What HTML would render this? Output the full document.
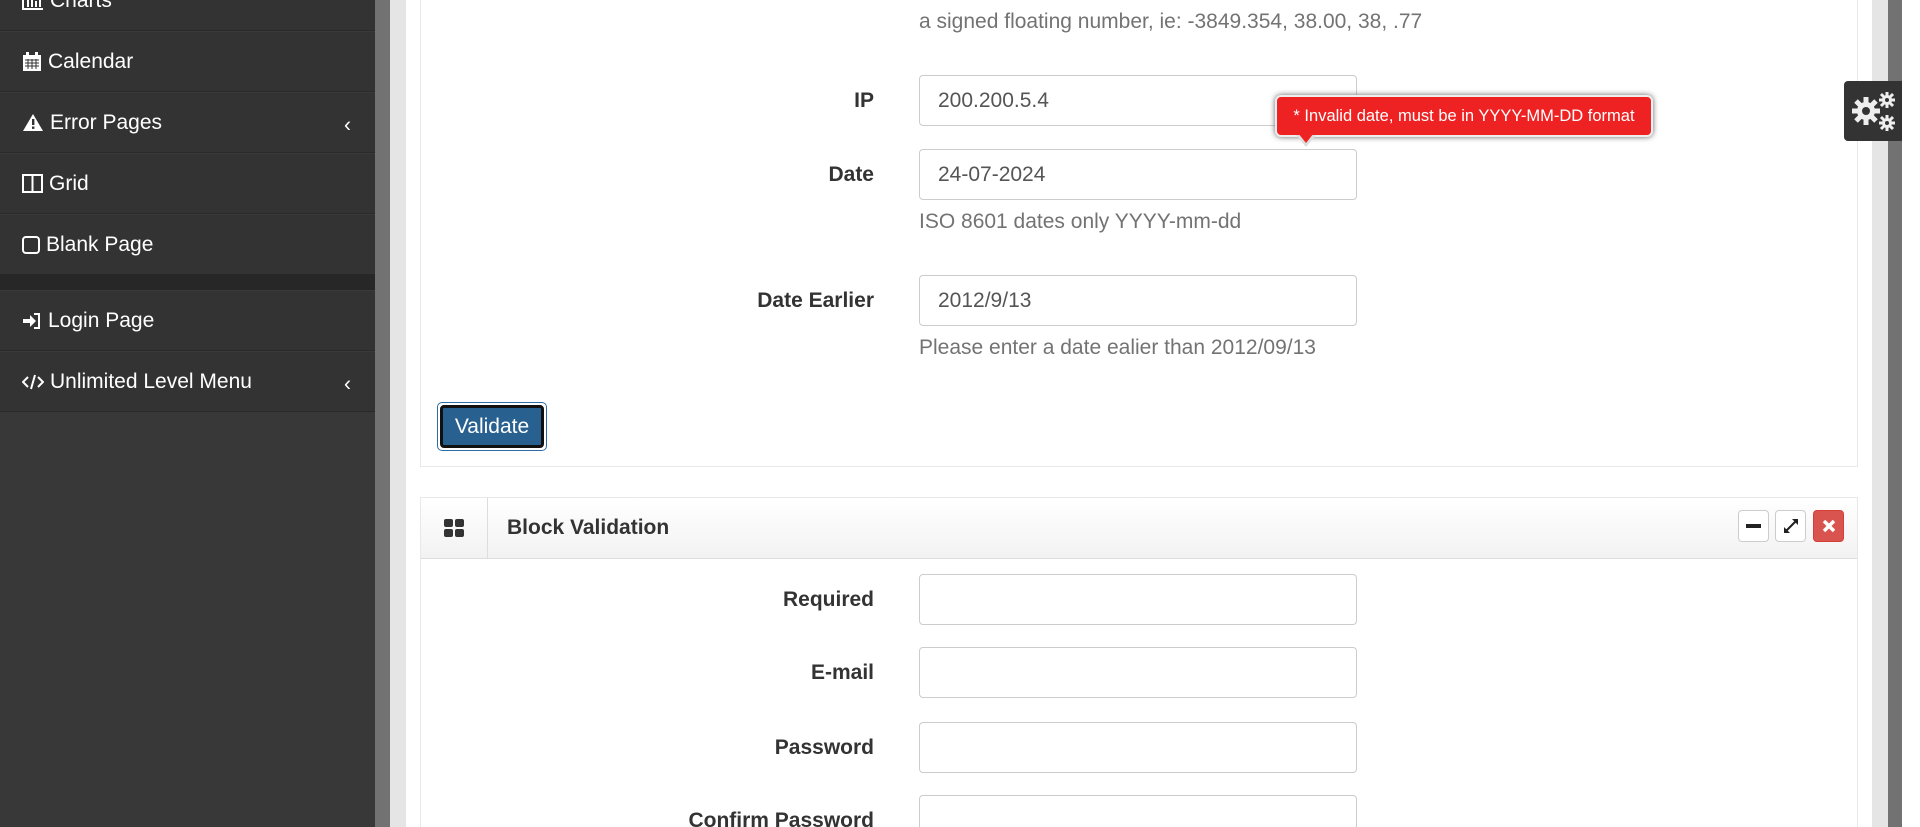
<!DOCTYPE html>
<html style="width:1920px;height:827px;overflow:hidden"><head><meta charset="utf-8"><style>
*{box-sizing:border-box;margin:0;padding:0}
body{width:1920px;height:827px;overflow:hidden;background:#fff;font-family:"Liberation Sans",Arial,sans-serif;position:relative}
.sb{position:absolute;left:0;top:0;width:375px;height:827px;background:#383838}
.it{position:absolute;left:0;width:375px;height:61px;background:#333;border-bottom:1px solid #2a2a2a;border-top:1px solid #3a3a3a;color:#fff;font-size:21px}
.it span{position:absolute;left:22px;top:50%;transform:translateY(-50%);display:flex;align-items:center;gap:6px}
.it .ch{position:absolute;left:344px;top:50%;transform:translateY(-40%);font-size:21px}
.band{position:absolute;left:0;top:274px;width:375px;height:16px;background:#272727}
.s1{position:absolute;left:375px;top:0;width:15px;height:827px;background:#727272}
.s2{position:absolute;left:390px;top:0;width:16px;height:827px;background:#e5e5e5}
.s3{position:absolute;left:1872px;top:0;width:16px;height:827px;background:#e5e5e5}
.s4{position:absolute;left:1888px;top:0;width:14px;height:827px;background:#727272}
.p1{position:absolute;left:420px;top:-10px;width:1438px;height:477px;border:1px solid #e8e8e8}
.p2{position:absolute;left:420px;top:497px;width:1438px;height:330px;border:1px solid #e8e8e8;border-bottom:none}
.hd{position:absolute;left:0;top:0;width:100%;height:61px;background:linear-gradient(#fff,#f2f2f2);border-bottom:1px solid #ddd}
.lbl{position:absolute;right:calc(1920px - 874px);font-weight:bold;color:#333;font-size:21px;text-align:right;white-space:nowrap}
.inp{position:absolute;left:919px;width:438px;height:51px;border:1px solid #ccc;border-radius:4px;font-size:21px;color:#555;padding:0 18px;line-height:49px}
.help{position:absolute;left:919px;font-size:21px;color:#737373;white-space:nowrap}
.btn{position:absolute;width:31px;height:32px;border:1px solid #ccc;border-radius:4px;background:#fff}
</style></head><body>
<div class="sb">
<div class="it" style="top:-30px"><span><svg width="22" height="18" viewBox="0 0 22 18"><path d="M1 2v15h20" stroke="#fff" stroke-width="2" fill="none"/><rect x="5" y="8" width="2" height="7" fill="#fff"/><rect x="9" y="5" width="2" height="10" fill="#fff"/><rect x="13" y="9" width="2" height="6" fill="#fff"/><rect x="17" y="6" width="2" height="9" fill="#fff"/></svg>Charts</span></div>
<div class="it" style="top:31px"><span><svg width="20" height="20" viewBox="0 0 20 20"><rect x="1" y="3" width="18" height="16" fill="#fff"/><rect x="4" y="0" width="3" height="5" fill="#fff"/><rect x="13" y="0" width="3" height="5" fill="#fff"/><path d="M3 8h14M3 11h14M3 14h14M6 7v10M10 7v10M14 7v10" stroke="#333" stroke-width="1"/></svg>Calendar</span></div>
<div class="it" style="top:92px"><span><svg width="22" height="19" viewBox="0 0 22 19"><path d="M11 1L21 18H1Z" fill="#fff"/><rect x="10" y="6" width="2.4" height="6" fill="#333"/><rect x="10" y="13.5" width="2.4" height="2.4" fill="#333"/></svg>Error Pages</span><span class="ch" style="left:344px">‹</span></div>
<div class="it" style="top:153px"><span><svg width="21" height="19" viewBox="0 0 21 19"><rect x="1" y="1" width="19" height="17" fill="none" stroke="#fff" stroke-width="2"/><path d="M10.5 1v17" stroke="#fff" stroke-width="2"/></svg>Grid</span></div>
<div class="it" style="top:214px"><span><svg width="18" height="18" viewBox="0 0 18 18"><rect x="1" y="1" width="16" height="16" rx="3" fill="none" stroke="#fff" stroke-width="2"/></svg>Blank Page</span></div>
<div class="band"></div>
<div class="it" style="top:290px"><span><svg width="20" height="18" viewBox="0 0 20 18"><path d="M1 7h7V3l6 6-6 6v-4H1z" fill="#fff"/><path d="M12 2h5v14h-5" fill="none" stroke="#fff" stroke-width="2"/></svg>Login Page</span></div>
<div class="it" style="top:351px"><span><svg width="22" height="18" viewBox="0 0 22 18"><path d="M6 4L1 9l5 5M16 4l5 5-5 5M13 2L9 16" fill="none" stroke="#fff" stroke-width="2"/></svg>Unlimited Level Menu</span><span class="ch" style="left:344px">‹</span></div>
</div>
<div class="s1"></div><div class="s2"></div><div class="s3"></div><div class="s4"></div>

<div class="p1"></div>
<div class="help" style="top:10px">a signed floating number, ie: -3849.354, 38.00, 38, .77</div>
<div class="lbl" style="top:89px">IP</div>
<div class="inp" style="top:75px">200.200.5.4</div>
<div class="lbl" style="top:163px">Date</div>
<div class="inp" style="top:149px">24-07-2024</div>
<div class="help" style="top:210px">ISO 8601 dates only YYYY-mm-dd</div>
<div class="lbl" style="top:289px">Date Earlier</div>
<div class="inp" style="top:275px">2012/9/13</div>
<div class="help" style="top:336px">Please enter a date ealier than 2012/09/13</div>
<div style="position:absolute;left:437px;top:402px;width:110px;height:49px;border:1px solid #2e6da4;border-radius:5px;padding:2px;background:#fff"><div style="width:100%;height:100%;background:#286090;border:3px solid #111;border-radius:4px;color:#fff;font-size:21px;text-align:center;line-height:37px">Validate</div></div>

<div class="p2"><div class="hd">
<div style="position:absolute;left:66px;top:0;width:1px;height:61px;background:#ddd"></div>
<svg style="position:absolute;left:23px;top:21px" width="20" height="19" viewBox="0 0 20 19"><rect x="0" y="0" width="9" height="8" rx="2" fill="#333"/><rect x="11" y="0" width="9" height="8" rx="2" fill="#333"/><rect x="0" y="10" width="9" height="8" rx="2" fill="#333"/><rect x="11" y="10" width="9" height="8" rx="2" fill="#333"/></svg>
<div style="position:absolute;left:86px;top:18px;font-size:21px;font-weight:bold;color:#333">Block Validation</div>
</div></div>
<div class="btn" style="left:1738px;top:510px"><div style="position:absolute;left:7px;top:13px;width:15px;height:4px;background:#222"></div></div>
<div class="btn" style="left:1775px;top:510px"><svg style="position:absolute;left:6px;top:6px" width="18" height="18" viewBox="0 0 18 18"><path d="M4 14L14 4" stroke="#222" stroke-width="2"/><path d="M10 2h6v6zM2 10v6h6z" fill="#222"/></svg></div>
<div class="btn" style="left:1813px;top:510px;background:#d9534f;border-color:#d43f3a"><svg style="position:absolute;left:8px;top:8px" width="14" height="14" viewBox="0 0 14 14"><path d="M2 2l10 10M12 2L2 12" stroke="#fff" stroke-width="3.5"/></svg></div>

<div class="lbl" style="top:588px">Required</div>
<div class="inp" style="top:574px"></div>
<div class="lbl" style="top:661px">E-mail</div>
<div class="inp" style="top:647px"></div>
<div class="lbl" style="top:736px">Password</div>
<div class="inp" style="top:722px"></div>
<div class="lbl" style="top:809px">Confirm Password</div>
<div class="inp" style="top:795px"></div>

<div style="position:absolute;left:1275px;top:95px;width:378px;height:42px;background:#ee2222;border:2px solid #eee;border-radius:6px;box-shadow:0 0 6px #666;color:#fff;font-size:16.5px;line-height:38px;text-align:center">* Invalid date, must be in YYYY-MM-DD format</div>
<div style="position:absolute;left:1296px;top:135px;width:0;height:0;border-left:10px solid transparent;border-right:10px solid transparent;border-top:12px solid #ddd"></div>
<div style="position:absolute;left:1298px;top:133px;width:0;height:0;border-left:8px solid transparent;border-right:8px solid transparent;border-top:10px solid #ee2222"></div>

<div style="position:absolute;left:1844px;top:81px;width:58px;height:60px;background:#333;border-radius:4px 0 0 4px">
<svg width="58" height="60" viewBox="0 0 58 60"><g fill="#eee">
<circle cx="22" cy="30" r="9"/><g stroke="#eee" stroke-width="5"><path d="M22 16v28M8 30h28M12 20l20 20M32 20L12 40"/></g>
<circle cx="43" cy="19" r="5"/><g stroke="#eee" stroke-width="3"><path d="M43 11v16M35 19h16M37 13l12 12M49 13L37 25"/></g>
<circle cx="43" cy="42" r="5"/><g stroke="#eee" stroke-width="3"><path d="M43 34v16M35 42h16M37 36l12 12M49 36L37 48"/></g></g>
<circle cx="22" cy="30" r="4" fill="#333"/><circle cx="43" cy="19" r="2" fill="#333"/><circle cx="43" cy="42" r="2" fill="#333"/></svg></div>
</body></html>
